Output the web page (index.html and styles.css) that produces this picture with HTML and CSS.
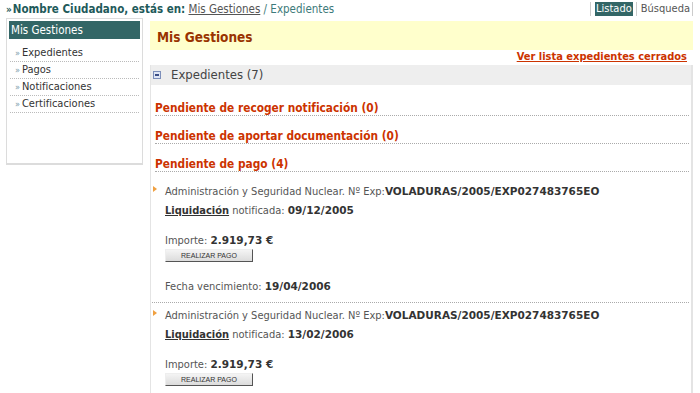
FILE: index.html
```html
<!DOCTYPE html>
<html lang="es">
<head>
    <meta charset="UTF-8">
    <title>Mis Gestiones - Expedientes</title>
    <link rel="stylesheet" href="styles.css">
</head>
<body>
    <!-- Barra superior -->
    <div class="topbar">
        <div class="breadcrumb">
            <span class="raquo">&raquo;</span><strong>Nombre Ciudadano, estás en:</strong>
            <a href="#">Mis Gestiones</a> / Expedientes
        </div>
        <div class="tabs">
            <a href="#" class="tab active">Listado</a><a href="#" class="tab">Búsqueda</a>
        </div>
    </div>

    <div class="layout">
        <!-- Menu lateral -->
        <div class="sidebar">
            <div class="sidebar-title">Mis Gestiones</div>
            <ul class="side-menu">
                <li><a href="#">Expedientes</a></li>
                <li><a href="#">Pagos</a></li>
                <li><a href="#">Notificaciones</a></li>
                <li><a href="#">Certificaciones</a></li>
            </ul>
        </div>

        <!-- Contenido -->
        <div class="content">
            <h1 class="page-title">Mis Gestiones</h1>
            <div class="closed-link"><a href="#">Ver lista expedientes cerrados</a></div>

            <div class="panel">
                <div class="panel-head">
                    <span class="toggle"></span>Expedientes (7)
                </div>

                <div class="group">Pendiente de recoger notificación (0)</div>
                <div class="group">Pendiente de aportar documentación (0)</div>
                <div class="group">Pendiente de pago (4)</div>

                <div class="pagos">
                    <div class="pago">
                        <p>Administración y Seguridad Nuclear. Nº Exp:<b>VOLADURAS/2005/EXP027483765EO</b></p>
                        <p><a href="#" class="liq">Liquidación</a> notificada: <b>09/12/2005</b></p>
                        <p class="importe">Importe: <b>2.919,73 €</b></p>
                        <button class="btn-pago">REALIZAR PAGO</button>
                        <p class="vence">Fecha vencimiento: <b>19/04/2006</b></p>
                    </div>
                    <div class="pago">
                        <p>Administración y Seguridad Nuclear. Nº Exp:<b>VOLADURAS/2005/EXP027483765EO</b></p>
                        <p><a href="#" class="liq">Liquidación</a> notificada: <b>13/02/2006</b></p>
                        <p class="importe">Importe: <b>2.919,73 €</b></p>
                        <button class="btn-pago">REALIZAR PAGO</button>
                        <p class="vence">Fecha vencimiento: <b>19/04/2006</b></p>
                    </div>
                </div>
            </div>
        </div>
    </div>
</body>
</html>
```

FILE: styles.css
```css
/* Colores del portal */
:root {
    --teal: #336666;
    --teal-text: #1e5a5a;
    --red: #cc3300;
    --dark-red: #993300;
    --text: #555;
    --line: #dcdcdc;
}

body {
    margin: 0;
    padding: 0 7px 0 6px;
    font-family: "DejaVu Sans Condensed", "DejaVu Sans", Verdana, sans-serif;
    font-size: 11px;
    color: var(--text);
    background: #fff;
}

/* Barra superior */
.topbar {
    display: flex;
    justify-content: space-between;
    align-items: flex-start;
    height: 18px;
}

.breadcrumb {
    padding-top: 2px;
    font-size: 11.5px;
    color: #3d7a7a;
}

.breadcrumb strong {
    color: var(--teal-text);
}

.breadcrumb a {
    color: #555;
}

.raquo {
    font-size: 10px;
    font-weight: bold;
    color: var(--teal-text);
    margin-right: 1px;
}

.tabs {
    display: flex;
    margin-top: 2px;
    border-left: 1px solid #ccc;
    padding-left: 4px;
}

.tab {
    padding: 0 2px 0 1px;
    line-height: 14px;
    color: #555;
    text-decoration: none;
    border-right: 1px solid #ccc;
    font-size: 11px;
}

.tab + .tab {
    padding-left: 4px;
    padding-right: 2px;
}

.tab.active {
    background: var(--teal);
    color: #fff;
    margin-right: 4px;
    border-right: none;
    padding-right: 1px;
    position: relative;
}

.tab.active::after {
    content: "";
    position: absolute;
    right: -4px;
    top: 0;
    bottom: 0;
    border-right: 1px solid #ccc;
}

/* Layout */
.layout {
    display: flex;
    align-items: flex-start;
    gap: 7px;
}

.sidebar {
    width: 131px;
    height: 140px;
    border: 1px solid var(--line);
    border-bottom-width: 2px;
    padding: 2px;
    flex-shrink: 0;
}

.sidebar-title {
    background: var(--teal);
    color: #fff;
    font-size: 11.5px;
    line-height: 18px;
    padding-left: 2px;
}

.side-menu {
    list-style: none;
    margin: 6px 0 0;
    padding: 0 1px;
}

.side-menu li {
    border-bottom: 1px dotted #bbb;
    line-height: 16px;
    padding-left: 5px;
}

.side-menu li::before {
    content: "\00bb";
    color: #7a9aaa;
    font-size: 9px;
    margin-right: 2px;
}

.side-menu a {
    color: #333;
    text-decoration: none;
}

/* Contenido */
.content {
    flex: 1;
    padding-top: 3px;
}

.page-title {
    margin: 0;
    background: #ffffcc;
    color: var(--dark-red);
    font-size: 13.5px;
    line-height: 25px;
    padding: 4px 0 0 7px;
}

.closed-link {
    text-align: right;
    padding-right: 6px;
    line-height: 14px;
}

.closed-link a {
    color: var(--red);
    font-weight: bold;
}

.panel {
    margin-top: 1px;
    border-left: 1px solid #e4e4e4;
    border-right: 2px solid #e4e4e4;
}

.panel-head {
    background: #eeeeee;
    height: 20px;
    line-height: 20px;
    font-size: 13px;
    color: #444;
    padding-left: 2px;
    display: flex;
    align-items: center;
}

.toggle {
    width: 6px;
    height: 6px;
    border: 1px solid #7d8fba;
    background: #dfe6f5;
    margin-right: 10px;
    position: relative;
}

.toggle::after {
    content: "";
    position: absolute;
    left: 1px;
    right: 1px;
    top: 2px;
    height: 2px;
    background: #3c4e86;
}

.group {
    margin: 13px 2px 0 4px;
    border-bottom: 1px dotted #aaa;
    color: var(--red);
    font-weight: bold;
    font-size: 11.8px;
    line-height: 14px;
}

.panel-head + .group {
    margin-top: 16px;
}

.pagos {
    padding-top: 10px;
}

.pago {
    margin: 0 2px 0 1px;
    padding: 0 0 6px 13px;
    position: relative;
    color: #555;
}

.pago + .pago {
    border-top: 1px dotted #aaa;
    padding-top: 3px;
}

.pago::before {
    content: "";
    position: absolute;
    left: 1px;
    top: 4px;
    border-left: 4px solid #f0a040;
    border-top: 3px solid transparent;
    border-bottom: 3px solid transparent;
}

.pago + .pago::before {
    top: 7px;
}

.pago p {
    margin: 0;
    line-height: 18px;
}

.pago b {
    font-family: "DejaVu Sans", Verdana, sans-serif;
    font-size: 10.5px;
    color: #333;
}

.liq {
    color: #333;
    font-weight: bold;
}

.pago .importe {
    margin-top: 12px;
    line-height: 16px;
}

.btn-pago {
    display: block;
    width: 88px;
    height: 13px;
    padding: 0;
    font-family: "Liberation Sans", Arial, sans-serif;
    font-size: 7px;
    color: #333;
    background: linear-gradient(#f4f4f4, #dcdcdc);
    border: 1px solid;
    border-color: #eee #555 #555 #eee;
}

.pago .vence {
    margin-top: 15px;
}
```
